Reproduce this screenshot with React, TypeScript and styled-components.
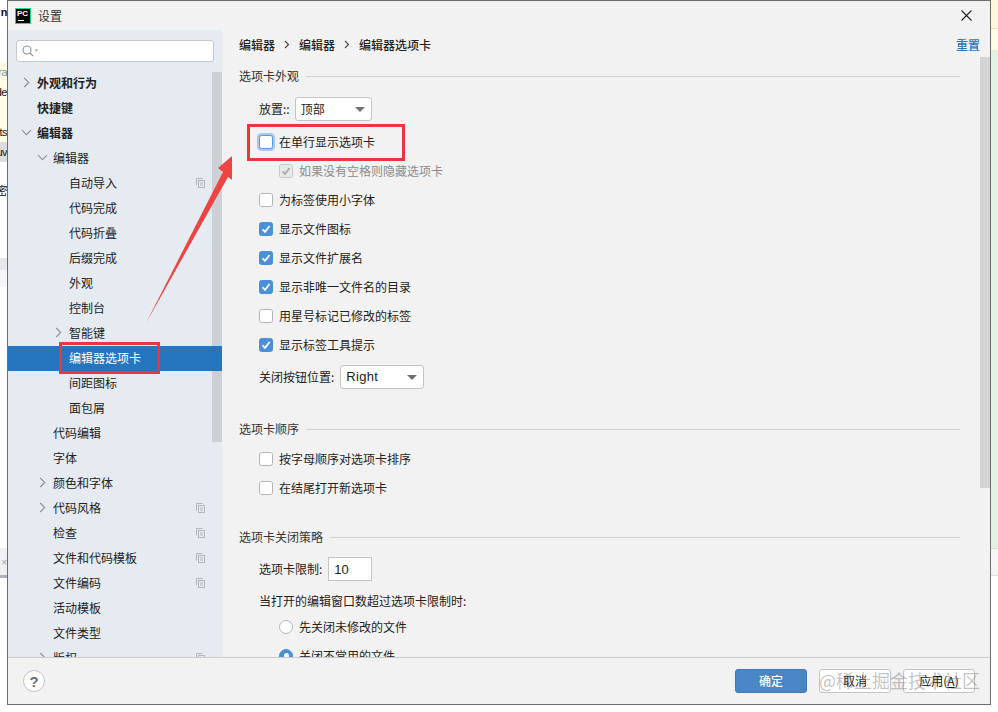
import React from "react";
import styled, { createGlobalStyle } from "styled-components";

const Global = createGlobalStyle`
  html, body { margin: 0; padding: 0; background: #fff; }
  body { font-family: "Noto Sans CJK SC", "Liberation Sans", sans-serif; font-size: 12px; color: #222; overflow: hidden; }
`;

const Page = styled.div`
  position: relative;
  width: 998px;
  height: 712px;
  display: grid;
  grid-template-columns: 7px 984px 7px;
  grid-template-rows: 705px 7px;
  overflow: hidden;
`;

const Strip = styled.div`
  display: flex;
  flex-direction: column;
  overflow: hidden;
`;

const Band = styled.div<{ $h?: number; $bg?: string; $fg?: string; $bold?: boolean }>`
  flex: ${(p) => (p.$h ? `0 0 ${p.$h}px` : "1 1 auto")};
  background: ${(p) => p.$bg || "#fff"};
  color: ${(p) => p.$fg || "#111"};
  font-family: "Liberation Sans", "Noto Sans CJK SC", sans-serif;
  font-size: 11px;
  letter-spacing: -0.5px;
  font-weight: ${(p) => (p.$bold ? 700 : 400)};
  display: flex;
  justify-content: flex-end;
  align-items: center;
  white-space: nowrap;
  overflow: hidden;
`;

const BottomGap = styled.div`
  grid-column: 1 / span 3;
  background: #fff;
`;

const Dialog = styled.div`
  border: 1px solid #6c6c6c;
  background: #f2f2f2;
  display: flex;
  flex-direction: column;
  min-height: 0;
`;

const TitleBar = styled.div`
  flex: 0 0 29px;
  display: flex;
  align-items: center;
  padding: 0 18px 0 7px;
`;

const Logo = styled.div`
  width: 16px;
  height: 16px;
  box-sizing: border-box;
  background: #000;
  border: 1px solid #21d789;
  color: #fff;
  font-family: "Liberation Sans", sans-serif;
  font-size: 8px;
  font-weight: 700;
  line-height: 9px;
  padding-left: 1px;
  position: relative;
  margin-right: 7px;
  &::after {
    content: "";
    position: absolute;
    left: 2px;
    bottom: 2px;
    width: 6px;
    height: 1px;
    background: #fff;
  }
`;

const Title = styled.div`
  flex: 1;
  font-size: 12px;
  color: #333;
`;

const Body = styled.div`
  flex: 1;
  min-height: 0;
  display: flex;
`;

const Sidebar = styled.div`
  position: relative;
  flex: 0 0 214px;
  background: #e6eaf1;
  overflow: hidden;
  padding-top: 10px;
  box-sizing: border-box;
`;

const SearchBox = styled.div`
  height: 22px;
  margin: 0 8px 9px;
  box-sizing: border-box;
  background: #fff;
  border: 1px solid #c6c9cc;
  border-radius: 3px;
  display: flex;
  align-items: center;
  padding-left: 5px;
`;

const ThumbLeft = styled.div`
  position: absolute;
  left: 204px;
  top: 42px;
  width: 10px;
  height: 370px;
  background: #cdd0d4;
`;

const TreeRow = styled.div<{ $level: number; $selected?: boolean; $bold?: boolean }>`
  position: ${(p) => (p.$selected ? "relative" : "static")};
  height: 25px;
  box-sizing: border-box;
  display: flex;
  align-items: center;
  padding-left: ${(p) => 13 + p.$level * 16}px;
  padding-right: 17px;
  padding-bottom: 2px;
  background: ${(p) => (p.$selected ? "#2675bf" : "transparent")};
  color: ${(p) => (p.$selected ? "#fff" : "#222")};
  font-weight: ${(p) => (p.$bold ? 700 : 400)};
  font-size: 12px;
`;

const ChevronSlot = styled.span`
  flex: 0 0 11px;
  margin-right: 5px;
  display: flex;
  justify-content: center;
  align-items: center;
`;

const TreeLabel = styled.span`
  flex: 1;
`;

const Main = styled.div`
  position: relative;
  flex: 1;
  min-width: 0;
  overflow: hidden;
`;

const ThumbRight = styled.div`
  position: absolute;
  right: 0;
  top: 27px;
  width: 10px;
  height: 431px;
  background: #d4d4d4;
`;

const Breadcrumb = styled.div`
  height: 30px;
  box-sizing: border-box;
  display: flex;
  align-items: center;
  padding: 0 10px 2px 17px;
  font-weight: 500;
  color: #222;
`;

const Crumb = styled.span``;

const CrumbSep = styled.span`
  width: 24px;
  display: flex;
  justify-content: center;
`;

const Reset = styled.span`
  margin-left: auto;
  color: #2f74b5;
  font-weight: 500;
`;

const SectionTitle = styled.div<{ $mt: number }>`
  height: 20px;
  box-sizing: border-box;
  margin: ${(p) => p.$mt}px 30px 0 17px;
  padding-bottom: 2px;
  display: flex;
  align-items: center;
  gap: 7px;
  color: #333;
  &::after {
    content: "";
    flex: 1;
    height: 1px;
    margin-top: 3px;
    background: #d0d0d0;
  }
`;

const FieldRow = styled.div<{ $mt: number; $gap: number }>`
  height: 24px;
  margin-top: ${(p) => p.$mt}px;
  padding-left: 37px;
  display: flex;
  align-items: center;
  gap: ${(p) => p.$gap}px;
  color: #222;
`;

const FieldLabel = styled.span`
  padding-bottom: 2px;
`;

const NoteRow = styled.div<{ $mt: number }>`
  height: 20px;
  box-sizing: border-box;
  margin-top: ${(p) => p.$mt}px;
  padding: 0 0 2px 37px;
  display: flex;
  align-items: center;
  color: #222;
`;

const Select = styled.div<{ $w: number }>`
  width: ${(p) => p.$w}px;
  height: 24px;
  box-sizing: border-box;
  background: #fff;
  border: 1px solid #c4c4c4;
  border-radius: 3px;
  padding: 0 5px 2px;
  display: flex;
  align-items: center;
  justify-content: space-between;
  color: #222;
  &::after {
    content: "";
    width: 0;
    height: 0;
    margin: 3px 1px 0 0;
    border-left: 5px solid transparent;
    border-right: 5px solid transparent;
    border-top: 5px solid #6e6e6e;
  }
`;

const Latin = styled.span`
  font-family: "Liberation Sans", sans-serif;
  font-size: 13px;
  letter-spacing: 0.3px;
`;

const NumberInput = styled.div`
  width: 44px;
  height: 24px;
  box-sizing: border-box;
  background: #fff;
  border: 1px solid #c4c4c4;
  padding-left: 5px;
  display: flex;
  align-items: center;
  font-family: "Liberation Sans", sans-serif;
  font-size: 13px;
`;

const OptionRow = styled.div<{ $indent: number; $mt?: number; $muted?: boolean }>`
  height: 29px;
  margin-top: ${(p) => p.$mt || 0}px;
  padding-left: ${(p) => p.$indent}px;
  display: flex;
  align-items: center;
  gap: 6px;
  color: ${(p) => (p.$muted ? "#8c8c8c" : "#222")};
`;

const Box = styled.span<{ $state?: "on" | "off" | "focus" | "disabled" }>`
  flex: 0 0 14px;
  width: 14px;
  height: 14px;
  box-sizing: border-box;
  border-radius: 2.5px;
  display: flex;
  align-items: center;
  justify-content: center;
  background: ${(p) => (p.$state === "on" ? "#4a90d9" : p.$state === "disabled" ? "#e9e9e9" : "#fff")};
  border: 1px solid
    ${(p) =>
      p.$state === "on"
        ? "#4a90d9"
        : p.$state === "focus"
          ? "#5b96d6"
          : p.$state === "disabled"
            ? "#c9c9c9"
            : "#b4b4b4"};
  box-shadow: ${(p) => (p.$state === "focus" ? "0 0 0 2px #a9c9ec" : "none")};
`;

const Radio = styled.span<{ $on?: boolean }>`
  flex: 0 0 14px;
  width: 14px;
  height: 14px;
  box-sizing: border-box;
  border-radius: 50%;
  background: ${(p) => (p.$on ? "#4a90d9" : "#fff")};
  border: 1px solid ${(p) => (p.$on ? "#4a90d9" : "#b4b4b4")};
  display: flex;
  align-items: center;
  justify-content: center;
  &::after {
    content: "";
    display: ${(p) => (p.$on ? "block" : "none")};
    width: 5px;
    height: 5px;
    border-radius: 50%;
    background: #fff;
  }
`;

const Footer = styled.div`
  position: relative;
  flex: 0 0 47px;
  box-sizing: border-box;
  border-top: 1px solid #cbcbcb;
  display: flex;
  align-items: center;
  padding: 0 15px 0 15px;
  gap: 12px;
`;

const Help = styled.div`
  width: 22px;
  height: 22px;
  box-sizing: border-box;
  margin-right: auto;
  border-radius: 50%;
  background: #fff;
  border: 1px solid #c4c4c4;
  color: #6e6e6e;
  font-family: "Liberation Sans", sans-serif;
  font-weight: 700;
  font-size: 15px;
  display: flex;
  align-items: center;
  justify-content: center;
`;

const DialogButton = styled.div<{ $primary?: boolean }>`
  width: 72px;
  height: 24px;
  box-sizing: border-box;
  padding-bottom: 2px;
  border-radius: 3px;
  display: flex;
  align-items: center;
  justify-content: center;
  background: ${(p) => (p.$primary ? "#4a86c5" : "#fff")};
  border: 1px solid ${(p) => (p.$primary ? "#3f78b4" : "#c4c4c4")};
  color: ${(p) => (p.$primary ? "#fff" : "#111")};
  font-weight: ${(p) => (p.$primary ? 500 : 400)};
`;

const Mnemonic = styled.span`
  text-decoration: underline;
`;

const Watermark = styled.div`
  position: absolute;
  right: 10px;
  top: 9px;
  font-size: 18px;
  line-height: 26px;
  white-space: nowrap;
  color: rgba(120, 120, 120, 0.45);
  pointer-events: none;
`;

const Highlight = styled.div<{ $l: number; $t: number; $w: number; $h: number }>`
  position: absolute;
  left: ${(p) => p.$l}px;
  top: ${(p) => p.$t}px;
  width: ${(p) => p.$w}px;
  height: ${(p) => p.$h}px;
  box-sizing: border-box;
  border: 3px solid #e8383d;
  pointer-events: none;
`;

const ArrowSvg = styled.svg`
  position: absolute;
  left: 0;
  top: 0;
  pointer-events: none;
`;

const Chevron = ({ open }: { open?: boolean }) => (
  <svg width="11" height="11" viewBox="0 0 11 11" fill="none" stroke="#8d9196" strokeWidth="1.1">
    {open ? <path d="M1 3.2 L5.5 7.7 L10 3.2" /> : <path d="M3.2 1 L7.7 5.5 L3.2 10" />}
  </svg>
);

const CopyIcon = () => (
  <svg width="9" height="10" viewBox="0 0 9 10" fill="none" stroke="#b3b7bc" strokeWidth="1">
    <path d="M0.5 7.5 V0.5 H6.5" />
    <rect x="2.5" y="2.5" width="6" height="7" />
    <path d="M4 5 H7 M4 7 H7" />
  </svg>
);

const Check = ({ color }: { color: string }) => (
  <svg width="12" height="12" viewBox="0 0 12 12" fill="none" stroke={color} strokeWidth="1.8">
    <path d="M2.5 6.3 L5 8.8 L9.6 3" />
  </svg>
);

const SearchIcon = () => (
  <svg width="17" height="12" viewBox="0 0 17 12" fill="none" stroke="#8f9499" strokeWidth="1.1">
    <circle cx="5" cy="5" r="4" />
    <path d="M8 8 L11 11" />
    <path d="M12.5 4.5 H16 L14.25 6.5 Z" fill="#8f9499" stroke="none" />
  </svg>
);

const CloseIcon = () => (
  <svg width="11" height="11" viewBox="0 0 11 11" fill="none" stroke="#222" strokeWidth="1.1">
    <path d="M0.5 0.5 L10.5 10.5 M10.5 0.5 L0.5 10.5" />
  </svg>
);

const CrumbArrow = () => (
  <svg width="6" height="9" viewBox="0 0 6 9" fill="none" stroke="#444" strokeWidth="1.1">
    <path d="M1 1 L4.5 4.5 L1 8" />
  </svg>
);

type Node = {
  label: string;
  level: number;
  arrow?: "open" | "closed";
  copy?: boolean;
  bold?: boolean;
  selected?: boolean;
};

const tree: Node[] = [
  { label: "外观和行为", level: 0, arrow: "closed", bold: true },
  { label: "快捷键", level: 0, bold: true },
  { label: "编辑器", level: 0, arrow: "open", bold: true },
  { label: "编辑器", level: 1, arrow: "open" },
  { label: "自动导入", level: 2, copy: true },
  { label: "代码完成", level: 2 },
  { label: "代码折叠", level: 2 },
  { label: "后缀完成", level: 2 },
  { label: "外观", level: 2 },
  { label: "控制台", level: 2 },
  { label: "智能键", level: 2, arrow: "closed" },
  { label: "编辑器选项卡", level: 2, selected: true },
  { label: "间距图标", level: 2 },
  { label: "面包屑", level: 2 },
  { label: "代码编辑", level: 1 },
  { label: "字体", level: 1 },
  { label: "颜色和字体", level: 1, arrow: "closed" },
  { label: "代码风格", level: 1, arrow: "closed", copy: true },
  { label: "检查", level: 1, copy: true },
  { label: "文件和代码模板", level: 1, copy: true },
  { label: "文件编码", level: 1, copy: true },
  { label: "活动模板", level: 1 },
  { label: "文件类型", level: 1 },
  { label: "版权", level: 1, arrow: "closed", copy: true },
];

const Option = ({
  label,
  state,
  indent = 37,
  mt,
  muted,
}: {
  label: string;
  state: "on" | "off" | "focus" | "disabled";
  indent?: number;
  mt?: number;
  muted?: boolean;
}) => (
  <OptionRow $indent={indent} $mt={mt} $muted={muted}>
    <Box $state={state}>
      {state === "on" && <Check color="#fff" />}
      {state === "disabled" && <Check color="#a8a8a8" />}
    </Box>
    {label}
  </OptionRow>
);

export default function App() {
  return (
    <Page>
      <Global />
      <Strip>
        <Band $h={24} $bold>n</Band>
        <Band $h={38} />
        <Band $h={20} $bg="#fdfde6" $fg="#888">ra</Band>
        <Band $h={20} $bg="#fdfde6">de</Band>
        <Band $h={20} $bg="#fdfde6" />
        <Band $h={20} $bg="#fdfde6">ts</Band>
        <Band $h={20} $bg="#dcdcdc">uv</Band>
        <Band $h={18} />
        <Band $h={20}>密</Band>
        <Band $h={58} />
        <Band $h={12} $bg="#e8e8e8" />
        <Band $h={17} $bg="#f6f6f6" />
        <Band $h={261} />
        <Band $h={27} $bg="#f0f0f0" $fg="#aaa">×</Band>
        <Band $h={3} $bg="#b0b0c0" />
        <Band />
      </Strip>

      <Dialog>
        <TitleBar>
          <Logo>PC</Logo>
          <Title>设置</Title>
          <CloseIcon />
        </TitleBar>
        <Body>
          <Sidebar>
            <ThumbLeft />
            <SearchBox>
              <SearchIcon />
            </SearchBox>
            {tree.map((n, i) => (
              <TreeRow key={i} $level={n.level} $bold={n.bold} $selected={n.selected}>
                <ChevronSlot>{n.arrow && <Chevron open={n.arrow === "open"} />}</ChevronSlot>
                <TreeLabel>{n.label}</TreeLabel>
                {n.copy && <CopyIcon />}
              </TreeRow>
            ))}
          </Sidebar>
          <Main>
            <ThumbRight />
            <Breadcrumb>
              <Crumb>编辑器</Crumb>
              <CrumbSep><CrumbArrow /></CrumbSep>
              <Crumb>编辑器</Crumb>
              <CrumbSep><CrumbArrow /></CrumbSep>
              <Crumb>编辑器选项卡</Crumb>
              <Reset>重置</Reset>
            </Breadcrumb>

            <SectionTitle $mt={6}>选项卡外观</SectionTitle>
            <FieldRow $mt={11} $gap={5}>
              <FieldLabel>放置::</FieldLabel>
              <Select $w={77}>顶部</Select>
            </FieldRow>
            <Option label="在单行显示选项卡" state="focus" mt={6} />
            <Option label="如果没有空格则隐藏选项卡" state="disabled" indent={57} muted />
            <Option label="为标签使用小字体" state="off" />
            <Option label="显示文件图标" state="on" />
            <Option label="显示文件扩展名" state="on" />
            <Option label="显示非唯一文件名的目录" state="on" />
            <Option label="用星号标记已修改的标签" state="off" />
            <Option label="显示标签工具提示" state="on" />
            <FieldRow $mt={6} $gap={6}>
              <FieldLabel>关闭按钮位置:</FieldLabel>
              <Select $w={84}><Latin>Right</Latin></Select>
            </FieldRow>

            <SectionTitle $mt={30}>选项卡顺序</SectionTitle>
            <Option label="按字母顺序对选项卡排序" state="off" mt={5} />
            <Option label="在结尾打开新选项卡" state="off" />

            <SectionTitle $mt={25}>选项卡关闭策略</SectionTitle>
            <FieldRow $mt={10} $gap={6}>
              <FieldLabel>选项卡限制:</FieldLabel>
              <NumberInput>10</NumberInput>
            </FieldRow>
            <NoteRow $mt={10}>当打开的编辑窗口数超过选项卡限制时:</NoteRow>
            <OptionRow $indent={57} $mt={1}><Radio />先关闭未修改的文件</OptionRow>
            <OptionRow $indent={57}><Radio $on />关闭不常用的文件</OptionRow>
          </Main>
        </Body>
        <Footer>
          <Help>?</Help>
          <DialogButton $primary>确定</DialogButton>
          <DialogButton>取消</DialogButton>
          <DialogButton>应用(<Mnemonic>A</Mnemonic>)</DialogButton>
          <Watermark>@稀土掘金技术社区</Watermark>
        </Footer>
      </Dialog>

      <Strip>
        <Band $h={28} $bg="#fdf7dc" />
        <Band $h={1} $bg="#e9e2bd" />
        <Band $h={21} $bg="#fdfbe6" />
        <Band $h={498} $bg="#e3f1e5" />
        <Band $h={1} $bg="#dddddd" />
        <Band $h={26} $bg="#f5f5f5" />
        <Band $h={1} $bg="#dddddd" />
        <Band />
      </Strip>
      <BottomGap />

      <Highlight $l={247} $t={124} $w={158} $h={37} />
      <Highlight $l={59} $t={342} $w={101} $h={32} />
      <ArrowSvg width="998" height="712" viewBox="0 0 998 712">
        <polygon points="232,156 218,168 223,172 146,323 228,177 232,180" fill="#ef4444" />
      </ArrowSvg>
    </Page>
  );
}
